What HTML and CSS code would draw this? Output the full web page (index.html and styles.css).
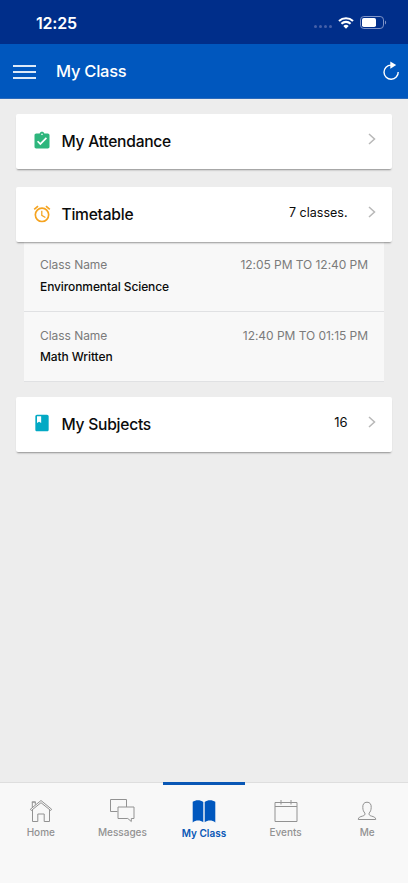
FILE: index.html
```html
<!DOCTYPE html>
<html lang="en">
<head>
  <meta charset="UTF-8" />
  <meta name="viewport" content="width=device-width, initial-scale=1" />
  <title>My Class</title>
  <link rel="stylesheet" href="styles.css">
</head>
<body>
  <div class="status-bar">
    <span class="time">12:25</span>
    <div class="status-icons">
      <span class="dots"><i></i><i></i><i></i><i></i></span>
      <svg class="wifi" width="16" height="12" viewBox="0 0 16 12">
        <path d="M1 4.1a10.2 10.2 0 0 1 14 0M3.400 6.700a6.700 6.700 0 0 1 9.200 0" fill="none" stroke="#fff" stroke-width="2.1"/>
        <path d="M8 11.800 5.300 9a3.900 3.900 0 0 1 5.400 0z" fill="#fff"/>
      </svg>
      <svg class="battery" width="27" height="13" viewBox="0 0 27 13">
        <rect x=".5" y=".5" width="23" height="12" rx="3.4" fill="none" stroke="#7f94c8"/>
        <rect x="2" y="2" width="14" height="9" rx="1.8" fill="#fff"/>
        <path d="M25 4.500c1.500.6 1.500 3.400 0 4z" fill="#7f94c8"/>
      </svg>
    </div>
  </div>

  <header class="header">
    <button class="menu" aria-label="Menu"><span></span><span></span><span></span></button>
    <h1>My Class</h1>
    <button class="refresh" aria-label="Refresh">
      <svg width="18" height="20" viewBox="0 0 18 20">
        <path d="M9 4.100a7.100 7.100 0 1 0 7.200 6.900" fill="none" stroke="#fff" stroke-width="1.4"/>
        <path d="M8.300.4 14.200 4 8.300 7.800z" fill="#fff"/>
      </svg>
    </button>
  </header>

  <main class="content">
    <section class="card">
      <svg class="card-icon" viewBox="0 0 24 24">
        <path fill="#2eb67d" d="M19 3h-4.200C14.400 1.800 13.300 1 12 1s-2.400.8-2.800 2H5c-1.100 0-2 .9-2 2v14c0 1.100.9 2 2 2h14c1.100 0 2-.9 2-2V5c0-1.100-.9-2-2-2zm-7 0c.6 0 1 .4 1 1s-.4 1-1 1-1-.4-1-1 .4-1 1-1zm-2 14-4-4 1.400-1.400 2.600 2.600 6.600-6.600L18 9z"/>
      </svg>
      <h2>My Attendance</h2>
      <svg class="chevron" width="8" height="12" viewBox="0 0 8 12"><path d="m1 1 5.500 5L1 11"/></svg>
    </section>

    <section class="card">
      <svg class="card-icon" viewBox="0 0 24 24">
        <path fill="#f5a31f" d="m22 5.700-4.600-3.900-1.300 1.500 4.600 3.900zM7.900 3.400 6.600 1.900 2 5.700l1.300 1.500zM12.500 8H11v6l4.700 2.900.8-1.200-4-2.400zM12 4a9 9 0 1 0 0 18 9 9 0 0 0 0-18zm0 16a7 7 0 1 1 0-14 7 7 0 0 1 0 14z"/>
      </svg>
      <h2>Timetable</h2>
      <span class="count">7 classes.</span>
      <svg class="chevron" width="8" height="12" viewBox="0 0 8 12"><path d="m1 1 5.500 5L1 11"/></svg>
    </section>
    <div class="timetable">
      <div class="lesson">
        <div class="lesson-top"><span>Class Name</span><span>12:05 PM TO 12:40 PM</span></div>
        <div class="lesson-name">Environmental Science</div>
      </div>
      <div class="lesson">
        <div class="lesson-top"><span>Class Name</span><span>12:40 PM TO 01:15 PM</span></div>
        <div class="lesson-name">Math Written</div>
      </div>
    </div>

    <section class="card">
      <svg class="card-icon book" viewBox="0 0 24 24">
        <path fill="#03a9c4" d="M18 2H6c-1.100 0-2 .9-2 2v16c0 1.100.9 2 2 2h12c1.100 0 2-.9 2-2V4c0-1.100-.9-2-2-2zM6 4h5v8l-2.500-1.500L6 12z"/>
      </svg>
      <h2>My Subjects</h2>
      <span class="count number">16</span>
      <svg class="chevron" width="8" height="12" viewBox="0 0 8 12"><path d="m1 1 5.500 5L1 11"/></svg>
    </section>
  </main>

  <nav class="tabs">
    <a class="tab">
      <svg width="26" height="26" viewBox="0 0 26 26">
        <path d="M2.300 12.300 13 3.500l10.700 8.800-1 1.200L13 5.700l-9.700 7.800zM4.300 10.300V5h3v2.700M3.800 5h4M4.500 13v11.500h5.300V17h6.400v7.500h5.300V13"/>
      </svg>
      <span>Home</span>
    </a>
    <a class="tab">
      <svg width="26" height="26" viewBox="0 0 26 26">
        <path d="M8.500 14.500h-7v-12h16v7.500M9 10h16v11.500h-2.700v3l-3.500-3H9z"/>
      </svg>
      <span>Messages</span>
    </a>
    <a class="tab active">
      <svg width="26" height="26" viewBox="0 0 26 26">
        <path d="M1.700 3.800C4.500 1.700 9.500 1.600 12.300 4v20.300c-3-2.300-7.500-2.300-10.600.2zM13.700 4C16.500 1.600 21.500 1.700 24.300 3.800v20.700c-3.100-2.500-7.600-2.500-10.600-.2z"/>
      </svg>
      <span>My Class</span>
    </a>
    <a class="tab">
      <svg width="26" height="26" viewBox="0 0 26 26">
        <path d="M2 5.500h22v19H2zM2 9.500h22M8 3v4.500M18 3v4.500"/>
      </svg>
      <span>Events</span>
    </a>
    <a class="tab">
      <svg width="26" height="26" viewBox="0 0 26 26">
        <path d="M4.300 22.500c0-2.300 1.800-2.700 4.200-3.400 2.300-.7 2.600-1.300 2.400-3-1.300-1.300-2-3-2.100-5.600C8.600 7.300 10 5.200 13 5.200s4.400 2.100 4.200 5.300c-.1 2.600-.8 4.300-2.100 5.600-.2 1.700.1 2.300 2.400 3 2.400.7 4.200 1.100 4.200 3.400z"/>
      </svg>
      <span>Me</span>
    </a>
  </nav>
</body>
</html>
```

FILE: styles.css
```css
* {
  box-sizing: border-box;
}
body {
  margin: 0;
  height: 883px;
  display: flex;
  flex-direction: column;
  background: #ededed;
  font-family: Inter, "Liberation Sans", sans-serif;
  color: #0b0b0b;
  overflow: hidden;
}
h1, h2 {
  margin: 0;
}
button {
  padding: 0;
  border: none;
  background: none;
}
svg {
  display: block;
}

/* top */
.status-bar {
  height: 44px;
  display: flex;
  justify-content: space-between;
  align-items: center;
  padding: 1px 21px 0 36px;
  background: #002e8a;
  color: #fff;
}
.time {
  font-size: 16px;
  font-weight: 600;
  letter-spacing: -0.2px;
}
.status-icons {
  display: flex;
  align-items: center;
}
.dots {
  display: flex;
  gap: 2px;
  margin: 8px 6px 0 0;
}
.dots i {
  width: 3px;
  height: 3px;
  border-radius: 50%;
  background: #4560a8;
}
.wifi {
  margin-right: 6px;
}
.header {
  height: 55px;
  display: flex;
  align-items: center;
  padding: 0 8px 0 13px;
  background: #0057be;
  border-bottom: 1px solid #2b6abb;
  color: #fff;
}
.menu {
  width: 23px;
  display: flex;
  flex-direction: column;
  gap: 4px;
  margin-top: 1px;
}
.menu span {
  height: 2px;
  background: #dce9f8;
}
.header h1 {
  flex: 1;
  margin-left: 20px;
  font-size: 16.5px;
  font-weight: 500;
  letter-spacing: -0.25px;
}

/* cards */
.content {
  flex: 1;
  padding: 15px 16px 0;
}
.card {
  position: relative;
  height: 55px;
  display: flex;
  align-items: center;
  padding: 0 16px 1px 15.5px;
  background: #fff;
  border-radius: 2px;
  box-shadow: 0 2px 2px -1px rgba(0,0,0,0.4);
}
.card + .card {
  margin-top: 18px;
}
.card-icon {
  width: 20px;
  height: 20px;
  margin-bottom: 1px;
}
.book {
  margin-bottom: 3px;
}
.card h2 {
  flex: 1;
  margin-left: 10px;
  font-size: 15.6px;
  font-weight: 500;
  letter-spacing: -0.25px;
}
.count {
  margin: 0 20.5px 4px 0;
  font-size: 12.5px;
}
.number {
  font-size: 13px;
}
.chevron {
  margin-bottom: 4px;
}
.chevron path {
  fill: none;
  stroke: #b8b8b8;
  stroke-width: 1.5;
}

/* timetable */
.timetable {
  margin: 0 8px 15px;
}
.lesson {
  height: 70px;
  padding: 14px 16px 0;
  background: #f8f8f8;
  border-bottom: 1px solid #e0e1e3;
}
.lesson + .lesson {
  padding-top: 15px;
}
.lesson-top {
  display: flex;
  justify-content: space-between;
  font-size: 12px;
  line-height: 18px;
  letter-spacing: -0.05px;
  color: #7b7b7b;
}
.lesson-name {
  margin-top: 4px;
  font-size: 12px;
  font-weight: 500;
  line-height: 18px;
  letter-spacing: -0.1px;
}
.lesson + .lesson .lesson-name {
  margin-top: 3px;
}

/* bottom tabs */
.tabs {
  height: 101px;
  display: flex;
  background: #f8f8f8;
  border-top: 1px solid #dedede;
}
.tab {
  flex: 1;
  display: flex;
  flex-direction: column;
  align-items: center;
  padding-top: 14px;
  font-size: 10px;
  font-weight: 500;
  color: #929292;
}
.tab svg {
  fill: none;
  stroke: #929292;
  stroke-width: 1;
}
.tab span {
  margin-top: 3px;
  line-height: 12px;
}
.tab.active {
  margin-top: -1px;
  padding-top: 13px;
  border-top: 3px solid #0957b5;
  color: #0957b5;
  font-weight: 600;
}
.tab.active svg {
  fill: #0057be;
  stroke: none;
}
```
